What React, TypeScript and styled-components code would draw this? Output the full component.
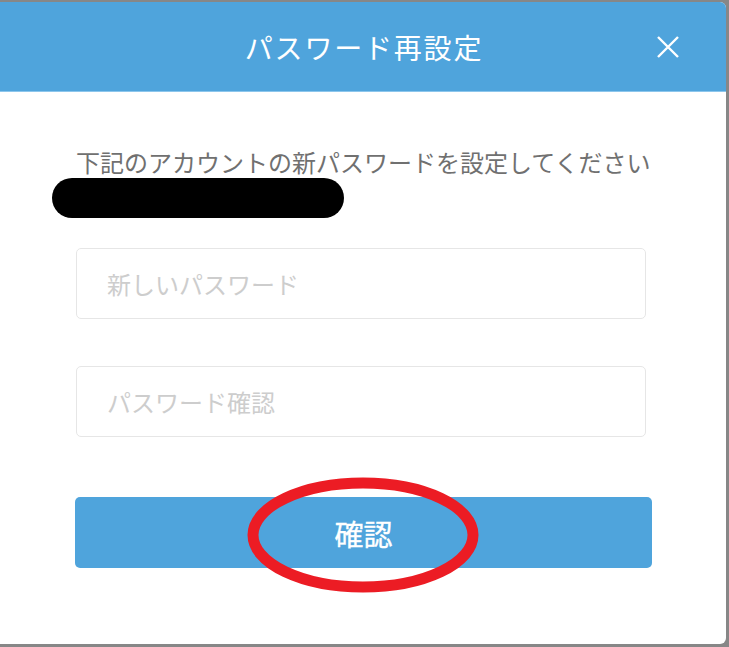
import styled, { createGlobalStyle } from "styled-components";

const GlobalStyle = createGlobalStyle`
  html, body {
    margin: 0;
    padding: 0;
    background: #878787;
  }
  body {
    font-family: "Noto Sans CJK JP", "Noto Sans", sans-serif;
  }
`;

const Modal = styled.div`
  width: 726px;
  height: 642px;
  margin-top: 2px;
  background: #ffffff;
  border-radius: 0 6px 6px 0;
  overflow: hidden;
  display: flex;
  flex-direction: column;
`;

const Header = styled.header`
  height: 89px;
  flex-shrink: 0;
  background: #4fa4dc;
  border-bottom: 1px solid #8cc6ec;
  display: flex;
  align-items: center;
  justify-content: center;
  position: relative;
`;

const Title = styled.h1`
  margin: 0 0 0 2px;
  font-size: 28px;
  font-weight: 400;
  color: #ffffff;
  letter-spacing: 1.8px;
`;

const CloseButton = styled.button`
  position: absolute;
  right: 46px;
  top: 33px;
  width: 24px;
  height: 24px;
  padding: 0;
  border: none;
  background: none;
  cursor: pointer;
  display: flex;
`;

const Body = styled.div`
  padding: 54px 78px 0 76px;
  display: flex;
  flex-direction: column;
`;

const Description = styled.p`
  margin: 0;
  font-size: 24px;
  line-height: 32px;
  color: #707070;
  white-space: nowrap;
`;

const Redaction = styled.div`
  width: 292px;
  height: 40px;
  margin: 0 0 0 -24px;
  background: #000000;
  border-radius: 20px;
`;

const Field = styled.input`
  box-sizing: border-box;
  width: 570px;
  height: 71px;
  margin-top: ${({ $gap }: { $gap: number }) => $gap}px;
  padding: 0 30px;
  border: 1px solid #e6e6e6;
  border-radius: 5px;
  font-family: inherit;
  font-size: 24px;
  color: #444;
  outline: none;
  &::placeholder {
    color: #cdcdcd;
  }
`;

const SubmitWrap = styled.div`
  position: relative;
  margin-top: 60px;
  width: 577px;
  margin-left: -1px;
`;

const SubmitButton = styled.button`
  width: 100%;
  height: 71px;
  border: none;
  border-radius: 5px;
  background: #4fa4dc;
  color: #ffffff;
  font-family: inherit;
  font-size: 29px;
  font-weight: 400;
  -webkit-text-stroke: 0.35px #ffffff;
  cursor: pointer;
`;

const Circle = styled.svg`
  position: absolute;
  left: 172px;
  top: -20px;
  pointer-events: none;
`;

export default function App() {
  return (
    <>
      <GlobalStyle />
      <Modal>
        <Header>
          <Title>パスワード再設定</Title>
          <CloseButton aria-label="close">
            <svg width="24" height="24" viewBox="0 0 24 24">
              <path d="M2 2L22 22M22 2L2 22" stroke="#ffffff" strokeWidth="2.4" />
            </svg>
          </CloseButton>
        </Header>
        <Body>
          <Description>下記のアカウントの新パスワードを設定してください</Description>
          <Redaction />
          <Field $gap={30} type="password" placeholder="新しいパスワード" />
          <Field $gap={47} type="password" placeholder="パスワード確認" />
          <SubmitWrap>
            <SubmitButton>確認</SubmitButton>
            <Circle width="232" height="116" viewBox="0 0 232 116">
              <ellipse cx="116" cy="58" rx="110" ry="52" fill="none" stroke="#ec1c24" strokeWidth="11" />
            </Circle>
          </SubmitWrap>
        </Body>
      </Modal>
    </>
  );
}
